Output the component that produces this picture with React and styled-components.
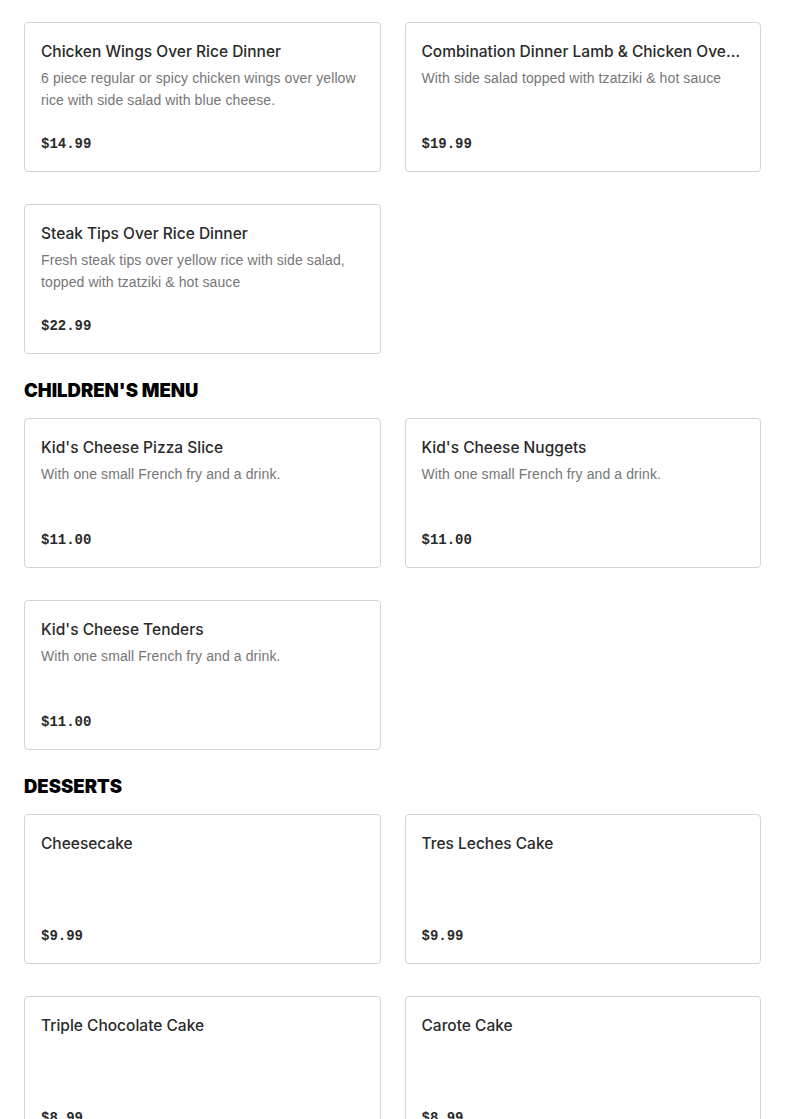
import React from 'react';
import styled, { createGlobalStyle } from 'styled-components';

const GlobalStyle = createGlobalStyle`
  * { box-sizing: border-box; }
  body {
    margin: 0;
    background: #fff;
    font-family: "Inter", "Liberation Sans", sans-serif;
    color: #2a2a2a;
  }
`

const sections = [
  {
    items: [
      { name: 'Chicken Wings Over Rice Dinner', desc: '6 piece regular or spicy chicken wings over yellow rice with side salad with blue cheese.', price: '$14.99' },
      { name: 'Combination Dinner Lamb & Chicken Over Rice', desc: 'With side salad topped with tzatziki & hot sauce', price: '$19.99' },
      { name: 'Steak Tips Over Rice Dinner', desc: 'Fresh steak tips over yellow rice with side salad, topped with tzatziki & hot sauce', price: '$22.99' },
    ],
  },
  {
    title: "CHILDREN'S MENU",
    items: [
      { name: "Kid's Cheese Pizza Slice", desc: 'With one small French fry and a drink.', price: '$11.00' },
      { name: "Kid's Cheese Nuggets", desc: 'With one small French fry and a drink.', price: '$11.00' },
      { name: "Kid's Cheese Tenders", desc: 'With one small French fry and a drink.', price: '$11.00' },
    ],
  },
  {
    title: 'DESSERTS',
    items: [
      { name: 'Cheesecake', price: '$9.99' },
      { name: 'Tres Leches Cake', price: '$9.99' },
      { name: 'Triple Chocolate Cake', price: '$8.99' },
      { name: 'Carote Cake', price: '$8.99' },
    ],
  },
]

function App() {
  return (
    <Page>
      <GlobalStyle />
      {sections.map((section, i) => (
        <Section key={i}>
          {section.title && <SectionTitle>{section.title}</SectionTitle>}
          <Grid>
            {section.items.map((item) => (
              <Card key={item.name}>
                <ItemName>{item.name}</ItemName>
                {item.desc && <Description>{item.desc}</Description>}
                <Price>{item.price}</Price>
              </Card>
            ))}
          </Grid>
        </Section>
      ))}
    </Page>
  )
}

export default App

const Page = styled.div`
  padding: 22px 24px 40px;
  display: flex;
  flex-direction: column;
  gap: 24px;
`

const Section = styled.section`
  display: flex;
  flex-direction: column;
  gap: 16px;
`

const SectionTitle = styled.h2`
  margin: 0;
  padding-top: 1px;
  font-family: "Inter", "Liberation Sans", sans-serif;
  font-size: 18.5px;
  font-weight: 900;
  line-height: 23px;
  color: #000;
`

const Grid = styled.div`
  display: grid;
  grid-template-columns: 1fr 1fr;
  column-gap: 24px;
  row-gap: 32px;
`

const Card = styled.div`
  height: 150px;
  min-width: 0;
  padding: 17px 16px 17px;
  border: 1px solid #d4d4d4;
  border-radius: 4px;
  display: flex;
  flex-direction: column;
`

const ItemName = styled.h3`
  margin: 0;
  font-size: 15.5px;
  font-weight: 500;
  line-height: 24px;
  color: #2a2a2a;
  white-space: nowrap;
  overflow: hidden;
  text-overflow: ellipsis;
`

const Description = styled.p`
  margin: 3px 0 0;
  font-family: "Liberation Sans", sans-serif;
  font-size: 14px;
  letter-spacing: 0.1px;
  line-height: 22px;
  color: #767676;
`

const Price = styled.div`
  margin-top: auto;
  font-family: "Liberation Mono", monospace;
  font-size: 14px;
  font-weight: 700;
  line-height: 20px;
  color: #2a2a2a;
`
